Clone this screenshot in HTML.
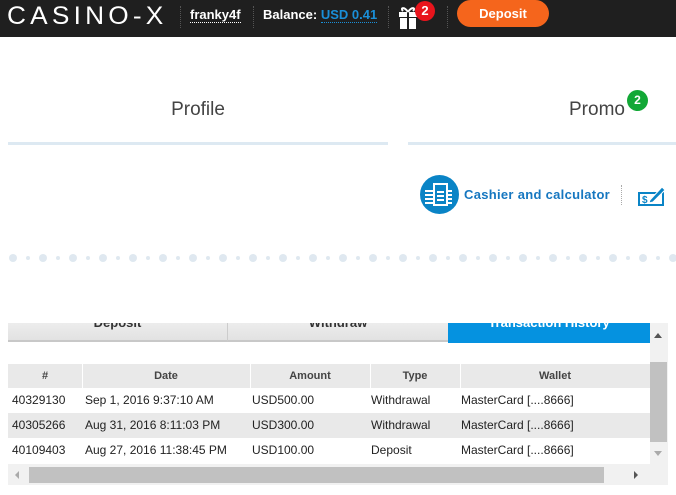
<!DOCTYPE html>
<html><head><style>
*{margin:0;padding:0;box-sizing:border-box}
body{width:676px;height:495px;overflow:hidden;background:#fff;font-family:"Liberation Sans",sans-serif;position:relative}
.hdr{position:absolute;left:0;top:0;width:676px;height:37px;background:#1f1f1f}
.a{position:absolute}
.sep{position:absolute;top:6px;height:22px;border-left:1px dotted #555}
.cols div{position:absolute;top:0;height:100%;font-size:12px;color:#222;line-height:25px}
</style></head><body>
<div class="hdr">
 <div class="a" style="left:7px;top:2px;font-size:25px;letter-spacing:4px;color:#fff;font-weight:normal;transform:scaleX(1.05);transform-origin:left">CASINO-X</div>
 <div class="sep" style="left:180px"></div>
 <div class="a" style="left:190px;top:7px;font-size:13px;font-weight:bold;color:#fff;border-bottom:1px dotted #fff;line-height:15px">franky4f</div>
 <div class="sep" style="left:253px"></div>
 <div class="a" style="left:263px;top:7px;font-size:13px;font-weight:bold;color:#fff;line-height:15px">Balance: <span style="color:#1a8fd8;border-bottom:1px dotted #1a8fd8">USD 0.41</span></div>
 <div class="sep" style="left:388px"></div>
 <svg class="a" style="left:398px;top:4px" width="20" height="26" viewBox="0 0 20 26"><rect x="1" y="8" width="18" height="5" fill="#fff"/><rect x="2" y="14" width="16" height="11" fill="#fff"/><rect x="9" y="8" width="2" height="17" fill="#1f1f1f"/><path d="M10 8 C6 2 2 4 5 7 M10 8 C14 2 18 4 15 7" stroke="#fff" stroke-width="2" fill="none"/></svg>
 <div class="a" style="left:415px;top:1px;width:20px;height:20px;border-radius:50%;background:#e8141c;color:#fff;font-weight:bold;font-size:13px;text-align:center;line-height:20px">2</div>
 <div class="sep" style="left:447px"></div>
 <div class="a" style="left:457px;top:0;width:92px;height:27px;border-radius:14px;background:#f5651c;color:#fff;font-weight:bold;font-size:13px;text-align:center;line-height:27px">Deposit</div>
</div>
<div class="a" style="left:8px;top:99px;width:380px;text-align:center;font-size:19px;color:#444">Profile</div>
<div class="a" style="left:569px;top:99px;font-size:19px;color:#444">Promo</div>
<div class="a" style="left:627px;top:90px;width:21px;height:21px;border-radius:50%;background:#12a836;color:#fff;font-weight:bold;font-size:12px;text-align:center;line-height:21px">2</div>
<div class="a" style="left:8px;top:142px;width:380px;height:3px;background:#dde9f2"></div>
<div class="a" style="left:408px;top:142px;width:268px;height:3px;background:#dde9f2"></div>
<div class="a" style="left:420px;top:175px;width:39px;height:39px;border-radius:50%;background:#0a84c6"></div>
<svg class="a" style="left:424px;top:183px" width="30" height="24" viewBox="0 0 30 24"><g fill="#fff"><rect x="1" y="7" width="8" height="2"/><rect x="1" y="11" width="8" height="2"/><rect x="1" y="15" width="8" height="2"/><rect x="1" y="19" width="8" height="2"/><rect x="10" y="1" width="13" height="21" fill="none" stroke="#fff" stroke-width="2"/><rect x="13" y="8" width="7" height="2"/><rect x="13" y="12" width="7" height="2"/><rect x="13" y="16" width="7" height="2"/><rect x="24" y="7" width="4" height="2"/><rect x="24" y="11" width="4" height="2"/><rect x="24" y="15" width="4" height="2"/><rect x="24" y="19" width="4" height="2"/></g></svg>
<div class="a" style="left:464px;top:187px;font-size:13px;font-weight:bold;color:#1677c0;letter-spacing:0.3px">Cashier and calculator</div>
<div class="a" style="left:621px;top:185px;height:20px;border-left:1px dotted #aaa"></div>
<svg class="a" style="left:638px;top:184px" width="28" height="22" viewBox="0 0 28 22"><rect x="1" y="9" width="24" height="12" fill="none" stroke="#0a84c6" stroke-width="2"/><text x="4" y="19" font-size="10" font-weight="bold" fill="#0a84c6" font-family="Liberation Sans">$</text><path d="M12 16 L24 3 L27 6 L15 18 L11 19 Z" fill="#0a84c6" stroke="#fff" stroke-width="1"/></svg>
<svg class="a" style="left:0;top:252px" width="676" height="12">
<g fill="#dfe8f0">
<circle cx="13" cy="6" r="4"/><circle cx="43" cy="6" r="4"/><circle cx="73" cy="6" r="4"/><circle cx="103" cy="6" r="4"/><circle cx="133" cy="6" r="4"/><circle cx="163" cy="6" r="4"/><circle cx="193" cy="6" r="4"/><circle cx="223" cy="6" r="4"/><circle cx="253" cy="6" r="4"/><circle cx="283" cy="6" r="4"/><circle cx="313" cy="6" r="4"/><circle cx="343" cy="6" r="4"/><circle cx="373" cy="6" r="4"/><circle cx="403" cy="6" r="4"/><circle cx="433" cy="6" r="4"/><circle cx="463" cy="6" r="4"/><circle cx="493" cy="6" r="4"/><circle cx="523" cy="6" r="4"/><circle cx="553" cy="6" r="4"/><circle cx="583" cy="6" r="4"/><circle cx="613" cy="6" r="4"/><circle cx="643" cy="6" r="4"/><circle cx="673" cy="6" r="4"/>
<circle cx="28" cy="6" r="2"/><circle cx="58" cy="6" r="2"/><circle cx="88" cy="6" r="2"/><circle cx="118" cy="6" r="2"/><circle cx="148" cy="6" r="2"/><circle cx="178" cy="6" r="2"/><circle cx="208" cy="6" r="2"/><circle cx="238" cy="6" r="2"/><circle cx="268" cy="6" r="2"/><circle cx="298" cy="6" r="2"/><circle cx="328" cy="6" r="2"/><circle cx="358" cy="6" r="2"/><circle cx="388" cy="6" r="2"/><circle cx="418" cy="6" r="2"/><circle cx="448" cy="6" r="2"/><circle cx="478" cy="6" r="2"/><circle cx="508" cy="6" r="2"/><circle cx="538" cy="6" r="2"/><circle cx="568" cy="6" r="2"/><circle cx="598" cy="6" r="2"/><circle cx="628" cy="6" r="2"/><circle cx="658" cy="6" r="2"/>
</g></svg>
<div class="a" style="left:8px;top:323px;width:660px;height:162px;overflow:hidden">
 <div class="a" style="left:0;top:-12px;width:220px;height:31px;background:linear-gradient(#f4f4f4,#e2e2e2);border-bottom:2px solid #c8c8c8;border-right:1px solid #ccc;text-align:center;font-weight:bold;font-size:13px;line-height:24px;color:#333">Deposit</div>
 <div class="a" style="left:220px;top:-12px;width:220px;height:31px;background:linear-gradient(#f4f4f4,#e2e2e2);border-bottom:2px solid #c8c8c8;text-align:center;font-weight:bold;font-size:13px;line-height:24px;color:#333">Withdraw</div>
 <div class="a" style="left:440px;top:-12px;width:202px;height:32px;background:#0592e0;text-align:center;font-weight:bold;font-size:13px;line-height:24px;color:#fff">Transaction History</div>
 <div class="a" style="left:0;top:41px;width:642px;height:24px;background:#e9e9e9"></div>
 <div class="a" style="left:0;top:90px;width:642px;height:25px;background:#e9e9e9"></div>
 <div class="a" style="left:74px;top:41px;height:24px;border-left:1px solid #fff"></div>
 <div class="a" style="left:242px;top:41px;height:24px;border-left:1px solid #fff"></div>
 <div class="a" style="left:362px;top:41px;height:24px;border-left:1px solid #fff"></div>
 <div class="a" style="left:452px;top:41px;height:24px;border-left:1px solid #fff"></div>
 <div class="a" style="left:0;top:41px;width:642px;height:24px;font-size:11px;font-weight:bold;color:#444;line-height:24px">
  <span class="a" style="left:0;width:74px;text-align:center">#</span>
  <span class="a" style="left:74px;width:168px;text-align:center">Date</span>
  <span class="a" style="left:242px;width:120px;text-align:center">Amount</span>
  <span class="a" style="left:362px;width:90px;text-align:center">Type</span>
  <span class="a" style="left:452px;width:190px;text-align:center">Wallet</span>
 </div>
 <div class="a cols" style="left:0;top:65px;width:642px;height:25px"><div style="left:4px">40329130</div><div style="left:77px">Sep 1, 2016 9:37:10 AM</div><div style="left:244px">USD500.00</div><div style="left:363px">Withdrawal</div><div style="left:453px">MasterCard [....8666]</div></div>
 <div class="a cols" style="left:0;top:90px;width:642px;height:25px"><div style="left:4px">40305266</div><div style="left:77px">Aug 31, 2016 8:11:03 PM</div><div style="left:244px">USD300.00</div><div style="left:363px">Withdrawal</div><div style="left:453px">MasterCard [....8666]</div></div>
 <div class="a cols" style="left:0;top:115px;width:642px;height:25px"><div style="left:4px">40109403</div><div style="left:77px">Aug 27, 2016 11:38:45 PM</div><div style="left:244px">USD100.00</div><div style="left:363px">Deposit</div><div style="left:453px">MasterCard [....8666]</div></div>
 <div class="a" style="left:642px;top:0;width:18px;height:162px;background:#f1f1f1"></div>
 <div class="a" style="left:642px;top:39px;width:17px;height:80px;background:#c1c1c1"></div>
 <div class="a" style="left:646px;top:10px;width:0;height:0;border-left:4px solid transparent;border-right:4px solid transparent;border-bottom:5px solid #555"></div>
 <div class="a" style="left:646px;top:128px;width:0;height:0;border-left:4px solid transparent;border-right:4px solid transparent;border-top:5px solid #aaa"></div>
 <div class="a" style="left:0;top:141px;width:642px;height:21px;background:#f1f1f1"></div>
 <div class="a" style="left:21px;top:144px;width:575px;height:16px;background:#c1c1c1"></div>
 <div class="a" style="left:7px;top:148px;width:0;height:0;border-top:4px solid transparent;border-bottom:4px solid transparent;border-right:4px solid #aaa"></div>
 <div class="a" style="left:626px;top:148px;width:0;height:0;border-top:4px solid transparent;border-bottom:4px solid transparent;border-left:4px solid #555"></div>
</div>
</body></html>
